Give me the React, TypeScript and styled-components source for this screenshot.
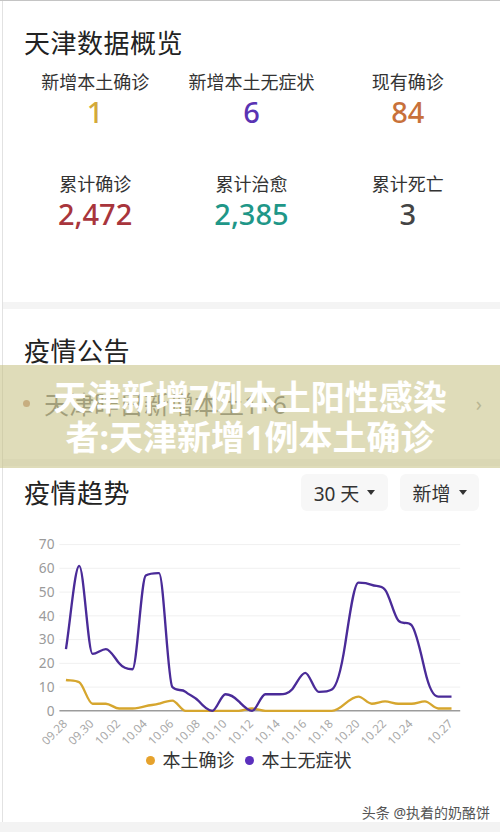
import React from 'react';
import styled, { createGlobalStyle } from 'styled-components';

const GlobalStyle = createGlobalStyle`
  html, body {
    margin: 0;
    padding: 0;
    background: #ffffff;
  }
  body {
    font-family: "Noto Sans", "Noto Sans CJK SC", sans-serif;
    color: #333;
  }
`;

const Page = styled.div`
  position: relative;
  width: 500px;
  height: 832px;
  overflow: hidden;
  border-top: 1px solid #c4c4c4;
  box-sizing: border-box;
  background: #fff;
`;

const Frame = styled.div`
  margin-left: 2px;
  border-left: 1px solid #e2e2e2;
  display: flex;
  flex-direction: column;
`;

const Card = styled.section<{ $height: number }>`
  height: ${p => p.$height}px;
  box-sizing: border-box;
  background: #fff;
  display: flex;
  flex-direction: column;
`;

const Separator = styled.div`
  height: 7px;
  background: #f4f4f4;
`;

const CardTitle = styled.h2`
  margin: 0;
  font-size: 26px;
  font-weight: 400;
  line-height: 36px;
  color: #222;
  letter-spacing: 0.5px;
`;

const TitleBlock = styled.div<{ $top: number }>`
  padding: ${p => p.$top}px 0 0 21px;
`;

const StatsGrid = styled.div`
  display: grid;
  grid-template-columns: repeat(3, 1fr);
  row-gap: 42px;
  padding: 8px 14px 0 14px;
`;

const Stat = styled.div`
  display: flex;
  flex-direction: column;
  align-items: center;
`;

const StatLabel = styled.div`
  font-size: 18px;
  line-height: 26px;
  color: #333;
`;

const StatValue = styled.div<{ $color: string }>`
  font-size: 29px;
  line-height: 34px;
  font-weight: 500;
  color: ${p => p.$color};
`;

const NoticeRow = styled.div`
  display: flex;
  align-items: center;
  padding: 16px 18px 0 20px;
  gap: 14px;
`;

const Dot = styled.span<{ $color: string; $size: number }>`
  width: ${p => p.$size}px;
  height: ${p => p.$size}px;
  border-radius: 50%;
  background: ${p => p.$color};
  flex-shrink: 0;
`;

const NoticeText = styled.div`
  flex: 1;
  font-size: 25px;
  color: #777;
  white-space: nowrap;
  overflow: hidden;
`;

const Chevron = styled.span`
  color: #aaa;
  font-size: 20px;
`;

const Banner = styled.div`
  position: absolute;
  left: 0;
  right: 0;
  top: 364px;
  height: 103px;
  background: rgba(196, 192, 128, 0.55);
  display: flex;
  flex-direction: column;
  align-items: center;
  justify-content: center;
  color: #fff;
  font-size: 34px;
  font-weight: 700;
  line-height: 40px;
  text-align: center;
`;

const TrendHeader = styled.div`
  display: flex;
  align-items: center;
  padding: 8px 21px 0 21px;
  gap: 12px;
`;

const Spacer = styled.div`
  flex: 1;
`;

const Select = styled.div<{ $width: number }>`
  width: ${p => p.$width}px;
  height: 37px;
  box-sizing: border-box;
  border-radius: 6px;
  background: #f7f7f7;
  display: flex;
  align-items: center;
  justify-content: center;
  gap: 8px;
  font-size: 19px;
  color: #333;
`;

const Caret = styled.span`
  width: 0;
  height: 0;
  border-left: 4px solid transparent;
  border-right: 4px solid transparent;
  border-top: 5px solid #333;
`;

const Chart = styled.svg`
  display: block;
  margin-top: 19px;
`;

const Legend = styled.div`
  display: flex;
  justify-content: center;
  align-items: center;
  gap: 10px;
  margin-top: 0;
  padding-right: 6px;
`;

const LegendItem = styled.div`
  display: flex;
  align-items: center;
  gap: 8px;
  font-size: 18px;
  color: #333;
  line-height: 24px;
`;

const Watermark = styled.div`
  align-self: flex-end;
  margin-top: 30px;
  padding-right: 10px;
  font-size: 14px;
  color: #555;
`;

const BottomBand = styled.div`
  position: absolute;
  left: 0;
  right: 0;
  bottom: 0;
  height: 10px;
  background: #f3f3f3;
`;

const PURPLE = [26, 61, 24, 26, 20, 17.5, 57, 58, 10, 8, 4, 0, 7, 4, 0, 7, 7, 9, 16, 8, 9, 28, 54, 53, 51, 38, 36, 17, 6, 6];
const ORANGE = [13, 12, 3, 3, 1, 1, 2, 3, 4.3, 0, 0, 0, 0, 0, 1, 0, 0, 0, 0, 0, 0, 3, 6, 3, 4, 3, 3, 4, 1, 1];
const DATES = ['09.28', '09.29', '09.30', '10.01', '10.02', '10.03', '10.04', '10.05', '10.06', '10.07', '10.08', '10.09', '10.10', '10.11', '10.12', '10.13', '10.14', '10.15', '10.16', '10.17', '10.18', '10.19', '10.20', '10.21', '10.22', '10.23', '10.24', '10.25', '10.26', '10.27'];

const X0 = 58.7;
const STEP = 13.6;
const Y0 = 185;
const UNIT = 2.43;

const px = (i: number) => X0 + i * STEP;
const py = (v: number) => Y0 - v * UNIT;

// monotone cubic curve so the line never dips under the axis
function smoothPath(values: number[]) {
  const pts = values.map((v, i) => [px(i), py(v)]);
  const n = pts.length;
  const s: number[] = [];
  for (let i = 0; i < n - 1; i++) s.push((pts[i + 1][1] - pts[i][1]) / STEP);
  const m: number[] = [];
  for (let i = 0; i < n; i++) {
    if (i === 0) m.push(s[0]);
    else if (i === n - 1) m.push(s[n - 2]);
    else {
      const a = s[i - 1];
      const b = s[i];
      if (a * b <= 0) m.push(0);
      else m.push((Math.sign(a) + Math.sign(b)) * Math.min(Math.abs(a), Math.abs(b), 0.5 * Math.abs((a + b) / 2)) * 1.6);
    }
  }
  let d = `M${pts[0][0]},${pts[0][1]}`;
  for (let i = 0; i < n - 1; i++) {
    const h = STEP / 3;
    d += ` C${pts[i][0] + h},${pts[i][1] + m[i] * h} ${pts[i + 1][0] - h},${pts[i + 1][1] - m[i + 1] * h} ${pts[i + 1][0]},${pts[i + 1][1]}`;
  }
  return d;
}

const stats = [
  { label: '新增本土确诊', value: '1', color: '#d3a93a' },
  { label: '新增本土无症状', value: '6', color: '#5a33b3' },
  { label: '现有确诊', value: '84', color: '#c8713a' },
  { label: '累计确诊', value: '2,472', color: '#a8353c' },
  { label: '累计治愈', value: '2,385', color: '#1f9788' },
  { label: '累计死亡', value: '3', color: '#444' },
];

const labelIdx = [0, 2, 4, 6, 8, 10, 12, 14, 16, 18, 20, 22, 24, 26, 29];

const TrendChart = () => (
  <Chart width={497} height={223} viewBox="0 0 497 223">
    {[10, 20, 30, 40, 50, 60, 70].map(v => (
      <line key={v} x1={52} x2={462} y1={py(v)} y2={py(v)} stroke="#f0f0f0" strokeWidth={1} />
    ))}
    {[0, 10, 20, 30, 40, 50, 60, 70].map(v => (
      <text key={v} x={47} y={py(v) + 5} textAnchor="end" fontSize={14} fill="#9a9a9a" fontFamily="Noto Sans, sans-serif">
        {v}
      </text>
    ))}
    <line x1={52} x2={462} y1={Y0} y2={Y0} stroke="#9c9c9c" strokeWidth={1.5} />
    <path d={smoothPath(ORANGE)} fill="none" stroke="#d6a62e" strokeWidth={2.4} strokeLinejoin="round" />
    <path d={smoothPath(PURPLE)} fill="none" stroke="#4a2b98" strokeWidth={2.4} strokeLinejoin="round" />
    {labelIdx.map(i => (
      <text
        key={i}
        x={px(i) + 2}
        y={Y0 + 14}
        textAnchor="end"
        fontSize={12}
        fill="#a8a8a8"
        fontFamily="Noto Sans, sans-serif"
        transform={`rotate(-45 ${px(i) + 2} ${Y0 + 14})`}
      >
        {DATES[i]}
      </text>
    ))}
  </Chart>
);

const App = () => {
  return (
    <>
      <GlobalStyle />
      <Page>
        <Frame>
          <Card $height={301}>
            <TitleBlock $top={24}>
              <CardTitle>天津数据概览</CardTitle>
            </TitleBlock>
            <StatsGrid>
              {stats.map(s => (
                <Stat key={s.label}>
                  <StatLabel>{s.label}</StatLabel>
                  <StatValue $color={s.color}>{s.value}</StatValue>
                </Stat>
              ))}
            </StatsGrid>
          </Card>
          <Separator />
          <Card $height={150}>
            <TitleBlock $top={24}>
              <CardTitle>疫情公告</CardTitle>
            </TitleBlock>
            <NoticeRow>
              <Dot $color="#c99a82" $size={7} />
              <NoticeText>天津昨日新增本土1+6</NoticeText>
              <Chevron>›</Chevron>
            </NoticeRow>
          </Card>
          <Separator />
          <Card $height={356}>
            <TrendHeader>
              <CardTitle>疫情趋势</CardTitle>
              <Spacer />
              <Select $width={87}>
                30 天 <Caret />
              </Select>
              <Select $width={79}>
                新增 <Caret />
              </Select>
            </TrendHeader>
            <TrendChart />
            <Legend>
              <LegendItem>
                <Dot $color="#e6a22c" $size={9} />
                本土确诊
              </LegendItem>
              <LegendItem>
                <Dot $color="#5b30bd" $size={9} />
                本土无症状
              </LegendItem>
            </Legend>
            <Watermark>头条 @执着的奶酪饼</Watermark>
          </Card>
        </Frame>
        <Banner>
          <div>天津新增7例本土阳性感染</div>
          <div>者:天津新增1例本土确诊</div>
        </Banner>
        <BottomBand />
      </Page>
    </>
  );
};

export default App;
